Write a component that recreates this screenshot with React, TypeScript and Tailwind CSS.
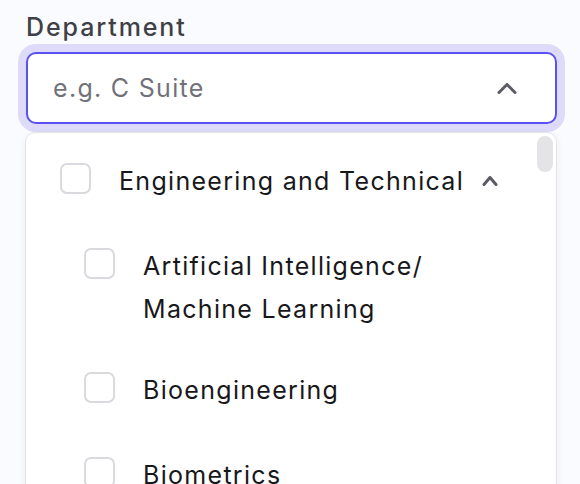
import React from "react";

function Chevron({ w, h, className }: { w: number; h: number; className?: string }) {
  return (
    <svg width={w} height={h} viewBox={`0 0 ${w} ${h}`} className={className} fill="none">
      <polyline
        points={`2,${h - 1.5} ${w / 2},1.5 ${w - 2},${h - 1.5}`}
        stroke="#5b5b66"
        strokeWidth="3"
        strokeLinecap="round"
        strokeLinejoin="round"
      />
    </svg>
  );
}

function Box() {
  return <div className="mt-[2.5px] h-[31px] w-[31px] shrink-0 rounded-[7px] border-2 border-[#d9d9de] bg-white" />;
}

export default function App() {
  return (
    <div
      className="h-screen overflow-hidden bg-[#fafbfe] pl-[26px] pt-[9px]"
      style={{ fontFamily: "Inter, 'Noto Sans', sans-serif" }}
    >
      <div className="text-[25px] font-medium leading-[36px] tracking-[1.9px] text-[#3f3f46]">Department</div>
      <div className="mt-[7px] flex h-[72px] w-[531px] items-center justify-between rounded-[10px] border-2 border-[#5b51f0] bg-white pl-[25px] pr-[38px] shadow-[0_0_0_8px_#dedbfa]">
        <span className="text-[25px] leading-[36px] tracking-[1.3px] text-[#71717a]">e.g. C Suite</span>
        <Chevron w={20} h={11} />
      </div>
      <div className="relative ml-[-1px] mt-[8px] h-[400px] w-[532px] rounded-[10px] border border-[#e4e4e7] bg-white pt-[6px] shadow-[0_2px_8px_rgba(20,20,60,0.06)]">
        <div className="absolute right-[3px] top-[3px] h-[36px] w-[16px] rounded-full bg-[#e4e4e7]" />
        <div className="flex items-start py-[21px] pl-[34px]">
          <Box />
          <span className="ml-[28px] text-[25px] leading-[43px] tracking-[1.3px] text-[#18181b]">Engineering and Technical</span>
          <Chevron w={16} h={10} className="ml-[18px] mt-[16px]" />
        </div>
        <div className="flex items-start pb-[17px] pl-[58px] pt-[21px]">
          <Box />
          <span className="ml-[28px] text-[25px] leading-[43px] tracking-[1.3px] text-[#18181b]">
            Artificial Intelligence/
            <br />
            Machine Learning
          </span>
        </div>
        <div className="flex items-start py-[21px] pl-[58px]">
          <Box />
          <span className="ml-[28px] text-[25px] leading-[43px] tracking-[1.3px] text-[#18181b]">Bioengineering</span>
        </div>
        <div className="flex items-start py-[21px] pl-[58px]">
          <Box />
          <span className="ml-[28px] text-[25px] leading-[43px] tracking-[1.3px] text-[#18181b]">Biometrics</span>
        </div>
      </div>
    </div>
  );
}
